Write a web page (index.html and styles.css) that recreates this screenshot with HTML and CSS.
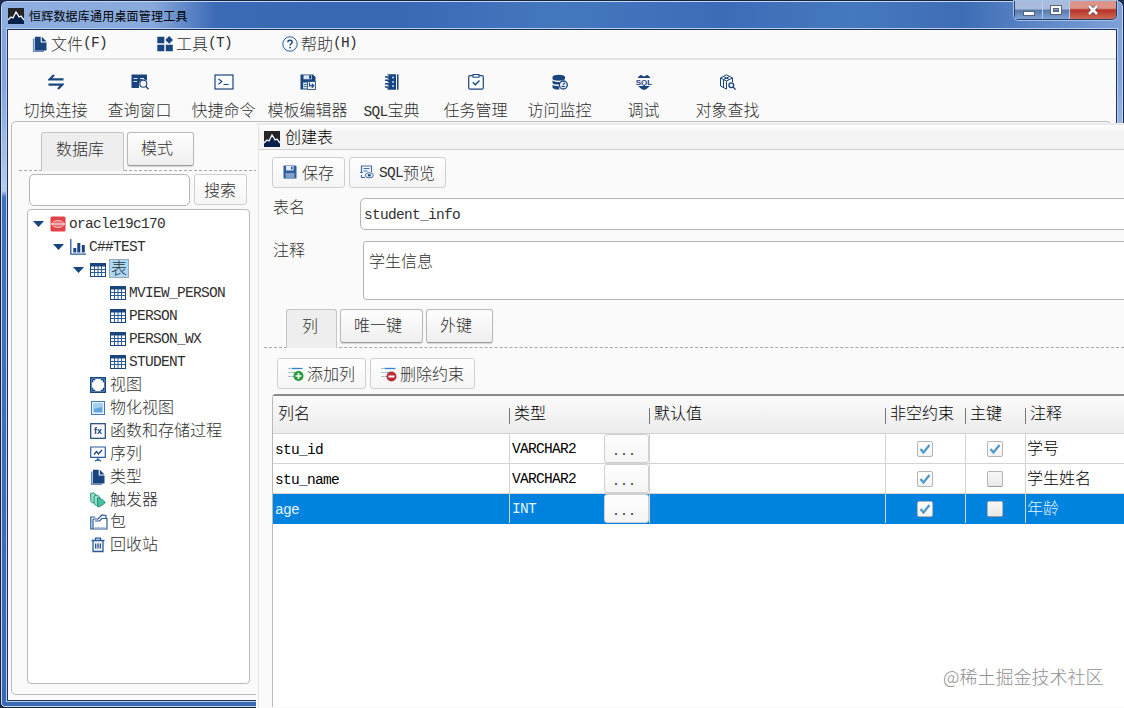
FILE: index.html
```html
<!DOCTYPE html>
<html lang="zh-CN">
  <head>
    <meta charset="UTF-8" />
    <meta name="viewport" content="width=device-width, initial-scale=1.0" />
    <title>恒辉数据库通用桌面管理工具</title>
    <link rel="stylesheet" href="styles.css">
  </head>
  <body>
    <svg class="sprite" xmlns="http://www.w3.org/2000/svg">
      <symbol id="logo" viewBox="0 0 16 16">
        <rect width="16" height="16" fill="#242426" />
        <path d="M0 11 3 9l2 1 3-5 2 2 1 2 2-1 3 3v5H0z" fill="#07204a" />
        <path d="M0 12l3-3 2 1 3-6 2 3 1 2 2-1 3 4" fill="none" stroke="#fff" stroke-width="1.3" />
      </symbol>
      <symbol id="file" viewBox="0 0 16 16">
        <path d="M1.7 2.5v12.7H12" fill="none" stroke="#6c8cba" stroke-width="1.6" />
        <path d="M3 .8h5.700v5.700h5.800v8H3z" fill="#18457f" />
        <path d="M9.8.8l4.7 4.6H9.8z" fill="#18457f" />
      </symbol>
      <symbol id="tools" viewBox="0 0 16 16">
        <path d="M.3.8h7v6.500h-7zM.3 8.800h7v6.500h-7zM8.800 8.800h7v6.500h-7zM12.2 0 16 3.900l-3.800 3.900L8.300 3.900z" fill="#18457f" />
      </symbol>
      <symbol id="help" viewBox="0 0 16 16">
        <circle cx="8" cy="8" r="7.2" fill="none" stroke="#2b5d9c" />
        <path d="M5.800 6.300c0-2.800 4.400-2.800 4.400 0C10.200 7.700 8 7.800 8 9.600" fill="none" stroke="#18457f" stroke-width="1.4" />
        <rect x="7.2" y="10.8" width="1.6" height="1.6" fill="#18457f" />
      </symbol>
      <symbol id="switch" viewBox="0 0 16 16">
        <path d="M6 1 1.800 5.300h13.700M10 15l4.200-4.300H.5" fill="none" stroke="#18457f" stroke-width="2.2" />
      </symbol>
      <symbol id="query" viewBox="0 0 18 16">
        <path d="M.5.5H16v6.200c-3-2.700-8-.7-8 3.500V14H.5z" fill="#18457f" />
        <path d="M2.500 4.500h4M2.500 7.500h3.500M9 4.500h4" stroke="#d9e4f2" />
        <circle cx="12.3" cy="9.7" r="3.5" fill="#fafafa" stroke="#18457f" stroke-width="1.1" />
        <path d="M14.800 12.300l2.700 3" stroke="#18457f" stroke-width="1.3" />
      </symbol>
      <symbol id="terminal" viewBox="0 0 20 16">
        <rect x="1" y="1" width="18" height="14" fill="#fbfcfe" stroke="#18457f" stroke-width="1.2" />
        <path d="M4.500 5l3.300 2.600-3.300 2.600M9.500 10.500h5" fill="none" stroke="#18457f" stroke-width="1.2" />
      </symbol>
      <symbol id="template" viewBox="0 0 16 16">
        <path d="M.5.5H13L15.500 3v12.500H.5z" fill="#18457f" />
        <path d="M3.500 1.200h8.500v4H3.500zM3 8.500h5v6H3z" fill="#dbe5f2" />
        <path d="M9.500 1.500h1.500v3H9.500zM3.500 10.500H7M3.500 12.500H7" fill="#18457f" stroke="#18457f" stroke-width=".7" />
        <path d="M7.500 7.500h8v8h-8z" fill="#fafafa" stroke="#18457f" stroke-width=".8" />
        <path d="M9.500 8.500v3.300h4M11.800 9.800l2 2-2 2" fill="none" stroke="#18457f" stroke-width="1.2" />
      </symbol>
      <symbol id="book" viewBox="0 0 16 16">
        <path d="M3.500.3H12v15.400H3.500zM13 .3h1.500v15.400H13z" fill="#18457f" />
        <path d="M1 2.500h4M1 5.800h4M1 9.200h4M1 12.600h4" stroke="#fafafa" stroke-width="2" />
        <path d="M1 3h4.500M1 6.300h4.500M1 9.700h4.500M1 13h4.500" stroke="#18457f" stroke-width="1.4" />
        <path d="M8 3.500h2M8 8h2M8 12h2" stroke="#c9d7ea" stroke-width="1.6" />
      </symbol>
      <symbol id="task" viewBox="0 0 16 16">
        <rect x=".7" y="1.7" width="14.6" height="13.5" rx="1.5" fill="#fcfdfe" stroke="#18457f" stroke-width="1.2" />
        <rect x="5" y=".5" width="6" height="2.7" fill="#fafafa" stroke="#18457f" />
        <path d="M4.800 8.300l2.500 2.500 4.200-4.200" fill="none" stroke="#18457f" stroke-width="1.4" />
      </symbol>
      <symbol id="monitor" viewBox="0 0 16 16">
        <path d="M.5 2.700C1 0 12.500 0 13 2.700v2.200C12 7.200 1 7.200.5 4.900zM.5 6.500C3 8.500 8 8 8 8l-1 2.500C4 10.700 1 10.200.5 9zM.5 11c2 1.400 6 1 6 1l1 3.500C4 15.800 1 15 .5 13.500z" fill="#18457f" />
        <circle cx="11.3" cy="11" r="4" fill="#e5edf7" stroke="#18457f" stroke-width="1.3" />
        <path d="M11 11l1.600-2.200M9.500 12.500h3.500" stroke="#18457f" stroke-width="1.2" />
      </symbol>
      <symbol id="find" viewBox="0 0 17 16">
        <path d="M1 4 7 .8 13 4 7 7zM1 4v8l6 3V7M13 4v4M4 2.500l6 3M10 2.500l-6 3v7.500" fill="none" stroke="#18457f" stroke-width="1" />
        <circle cx="11.8" cy="11.2" r="2.4" fill="#e1eaf5" stroke="#18457f" stroke-width="1.3" />
        <path d="M13.500 13l2.700 2.600" stroke="#18457f" stroke-width="1.3" />
      </symbol>
      <symbol id="oracle" viewBox="0 0 16 16">
        <rect x=".5" y=".5" width="15" height="15" rx="1.5" fill="#e24347" />
        <ellipse cx="8" cy="8" rx="5.8" ry="3.5" fill="none" stroke="#f7c5c4" />
        <path d="M1 8h14" stroke="#fbe4e3" stroke-width="1.3" />
        <path d="M4 6h8M4 10h8" stroke="#f7c5c4" stroke-width=".7" />
      </symbol>
      <symbol id="chart" viewBox="0 0 16 16">
        <path d="M.8 0v15.200H16" fill="none" stroke="#2b5d9c" stroke-width="1.3" />
        <path d="M3.300 9h3v4.500h-3zM7.300 4h3v9.500h-3zM11.800 6h3v7.500h-3z" fill="#18457f" />
      </symbol>
      <symbol id="table" viewBox="0 0 16 16">
        <rect x=".5" y="1.5" width="15" height="13" fill="#fff" stroke="#18457f" />
        <path d="M0 1h16v3.500H0z" fill="#18457f" />
        <path d="M1 7.500h14M1 10.500h14M4.500 4v10M8 4v10M11.500 4v10" stroke="#2b5d9c" />
      </symbol>
      <symbol id="view" viewBox="0 0 16 16">
        <rect x=".7" y=".7" width="14.6" height="14.6" fill="#7fa6d6" stroke="#18457f" stroke-width="1.4" />
        <path d="M3.500 3.500h9v9h-9zM5.500 2h5v12h-5zM2 5.500h12v5H2z" fill="#fff" />
        <path d="M2.500 5V2.500H5M11 2.500h2.500V5M13.500 11v2.500H11M5 13.500H2.500V11" fill="none" stroke="#18457f" />
      </symbol>
      <symbol id="mview" viewBox="0 0 16 16">
        <rect x="1.5" y="1.5" width="13" height="13" fill="#eaf4fc" stroke="#4477b5" />
        <path d="M3.500 3.500h9v9h-9z" fill="#62a5dd" />
        <path d="M3.500 3.500h9v3.500l-9 2z" fill="#a3cff0" />
      </symbol>
      <symbol id="sequence" viewBox="0 0 16 16">
        <path d="M.7 1h14.600v10.300H.7zM8 11.500V15M5 15.300l3-2 3 2" fill="none" stroke="#2b5d9c" stroke-width="1.2" />
        <path d="M4 8.500l2.500-3L8.500 8l3.500-4" fill="none" stroke="#18457f" stroke-width="1.3" />
      </symbol>
      <symbol id="trigger" viewBox="0 0 16 16">
        <path d="M.5 1.500 4 .8 6 3v7L3 11 .8 9.500z" fill="#9adcc6" stroke="#2c9c82" />
        <path d="M4 4l3.500-1L9.500 5v7l-3 1.500L4.200 12z" fill="#9adcc6" stroke="#2c9c82" />
        <path d="M7.500 6c3 0 5.500 2 7.800 4.500-2.300 2.200-4.500 3.800-7.500 4.500z" fill="#46c3a2" stroke="#218a70" />
      </symbol>
      <symbol id="package" viewBox="0 0 18 16">
        <path d="M3 15H.8V3h4.500M3 5h5l4-4 4 .5V4M3 5v10h14V4.500h-5L9.500 7H5" fill="none" stroke="#2b5d9c" stroke-width="1.2" />
        <path d="M4.500 13.500h11" stroke="#9db9dc" stroke-width=".8" />
      </symbol>
      <symbol id="trash" viewBox="0 0 16 16">
        <path d="M1.500 3.500h13M5.500 3V1.200h5V3M3 4v10.500h10V4" fill="#edf3fa" stroke="#2b5d9c" stroke-width="1.3" />
        <path d="M5.700 6.500v5M8 6.500v5M10.300 6.500v5" stroke="#18457f" stroke-width="1.2" />
      </symbol>
      <symbol id="save" viewBox="0 0 14 14">
        <path d="M.5.5h12l1 1v12H.5z" fill="#2e5d9d" />
        <path d="M3 1h7.500v4.500H3z" fill="#e2eaf4" />
        <path d="M8 1.500h1.500v3H8z" fill="#2e5d9d" />
        <path d="M2.500 8h9v5.500h-9z" fill="#7f9dc5" />
      </symbol>
      <symbol id="preview" viewBox="0 0 14 14">
        <path d="M5 12.500H1.500V10M1.500 8V1h10v6" fill="none" stroke="#3f6ea8" stroke-width="1.2" />
        <path d="M3.500 3.500h6M3.500 6h4M0 7.500h3" stroke="#3f6ea8" />
        <ellipse cx="9.3" cy="10.3" rx="4" ry="2.6" fill="#e2eaf4" stroke="#3f6ea8" />
        <circle cx="9.3" cy="10.3" r="1.3" fill="#18457f" />
      </symbol>
      <symbol id="add" viewBox="0 0 16 16">
        <path d="M.5 2.500h2M.5 6.500h2M.5 10.500h2" stroke="#8aa" />
        <path d="M3.500 2.500h11" stroke="#2d86cf" stroke-width="1.3" />
        <path d="M3.500 6.500h9M3.500 10.500h5" stroke="#7fb6cf" />
        <circle cx="10.5" cy="10" r="5" fill="#259a3b" />
        <path d="M7.500 10h6M10.500 7v6" stroke="#fff" stroke-width="1.6" />
      </symbol>
      <symbol id="remove" viewBox="0 0 16 16">
        <path d="M.5 2.500h2M.5 6.500h2M.5 10.500h2" stroke="#8aa" />
        <path d="M3.500 2.500h11" stroke="#2d86cf" stroke-width="1.3" />
        <path d="M3.500 6.500h9M3.500 10.500h5" stroke="#7fb6cf" />
        <circle cx="10.5" cy="10.5" r="5" fill="#b92f38" />
        <path d="M7.500 10.500h6" stroke="#fff" stroke-width="2" />
      </symbol>
      <symbol id="check" viewBox="0 0 12 12">
        <path d="M1.500 6l3 3.500L10.500 2" fill="none" stroke="#4e9acb" stroke-width="2.3" />
      </symbol>
      <symbol id="arrow" viewBox="0 0 11 6">
        <path d="M0 0h11L5.500 6z" fill="#18457f" />
      </symbol>
    </svg>

    <div class="window">
      <div class="title-bar">
        <svg class="logo"><use href="#logo" /></svg>
        <div class="title-text">恒辉数据库通用桌面管理工具</div>
        <div class="window-buttons">
          <div class="win-btn win-min"><svg viewBox="0 0 12 5"><rect x=".5" y=".5" width="11" height="4" fill="#fff" stroke="#55637e" /></svg></div>
          <div class="win-btn win-max"><svg viewBox="0 0 12 10"><rect x="2" y="2" width="8" height="6" fill="none" stroke="#55637e" stroke-width="4" /><rect x="2" y="2" width="8" height="6" fill="none" stroke="#fff" stroke-width="2" /></svg></div>
          <div class="win-btn win-close"><svg viewBox="0 0 12 10"><path d="M2 1l8 8M10 1 2 9" stroke="#5e4350" stroke-width="4" /><path d="M2 1l8 8M10 1 2 9" stroke="#fff" stroke-width="2.6" /></svg></div>
        </div>
      </div>

      <div class="client">
        <div class="menu-bar">
          <div class="menu-item"><svg><use href="#file" /></svg>文件<span class="en">(F)</span></div>
          <div class="menu-item"><svg><use href="#tools" /></svg>工具<span class="en">(T)</span></div>
          <div class="menu-item"><svg><use href="#help" /></svg>帮助<span class="en">(H)</span></div>
        </div>

        <div class="toolbar">
          <div class="tool"><svg><use href="#switch" /></svg><div>切换连接</div></div>
          <div class="tool"><svg class="wide"><use href="#query" /></svg><div>查询窗口</div></div>
          <div class="tool"><svg class="wider"><use href="#terminal" /></svg><div>快捷命令</div></div>
          <div class="tool"><svg><use href="#template" /></svg><div>模板编辑器</div></div>
          <div class="tool"><svg><use href="#book" /></svg><div><span class="en">SQL</span>宝典</div></div>
          <div class="tool"><svg><use href="#task" /></svg><div>任务管理</div></div>
          <div class="tool"><svg><use href="#monitor" /></svg><div>访问监控</div></div>
          <div class="tool">
            <svg class="wide" viewBox="0 0 18 16">
              <path d="M3 3 6 .7l2 1.600h2L12 .7 15 3v1H3zM3 12h12l-3.500 3-2.500 1-2.500-1z" fill="#18457f" />
              <text x="9" y="10.8" class="sql-glyph">SQL</text>
            </svg>
            <div>调试</div>
          </div>
          <div class="tool"><svg class="wide"><use href="#find" /></svg><div>对象查找</div></div>
        </div>

        <div class="workspace">
          <div class="sidebar">
            <div class="tabs">
              <div class="tab active">数据库</div>
              <div class="tab">模式</div>
            </div>
            <div class="search">
              <input type="text" class="search-input" />
              <button class="btn">搜索</button>
            </div>
            <div class="tree">
              <div class="node"><svg class="arrow"><use href="#arrow" /></svg><svg class="icon"><use href="#oracle" /></svg><span class="en">oracle19c170</span></div>
              <div class="node level-1"><svg class="arrow"><use href="#arrow" /></svg><svg class="icon"><use href="#chart" /></svg><span class="en">C##TEST</span></div>
              <div class="node level-2"><svg class="arrow"><use href="#arrow" /></svg><svg class="icon"><use href="#table" /></svg><span class="selected">表</span></div>
              <div class="node leaf level-3"><svg class="icon"><use href="#table" /></svg><span class="en">MVIEW_PERSON</span></div>
              <div class="node leaf level-3"><svg class="icon"><use href="#table" /></svg><span class="en">PERSON</span></div>
              <div class="node leaf level-3"><svg class="icon"><use href="#table" /></svg><span class="en">PERSON_WX</span></div>
              <div class="node leaf level-3"><svg class="icon"><use href="#table" /></svg><span class="en">STUDENT</span></div>
              <div class="node leaf level-2"><svg class="icon"><use href="#view" /></svg>视图</div>
              <div class="node leaf level-2"><svg class="icon"><use href="#mview" /></svg>物化视图</div>
              <div class="node leaf level-2">
                <svg class="icon" viewBox="0 0 16 16">
                  <rect x=".7" y=".7" width="14.6" height="14.6" fill="#fff" stroke="#18457f" stroke-width="1.2" />
                  <text x="8" y="11.3" class="fx-glyph">fx</text>
                </svg>
                函数和存储过程
              </div>
              <div class="node leaf level-2"><svg class="icon"><use href="#sequence" /></svg>序列</div>
              <div class="node leaf level-2"><svg class="icon"><use href="#file" /></svg>类型</div>
              <div class="node leaf level-2"><svg class="icon"><use href="#trigger" /></svg>触发器</div>
              <div class="node leaf level-2"><svg class="icon folder"><use href="#package" /></svg>包</div>
              <div class="node leaf level-2"><svg class="icon"><use href="#trash" /></svg>回收站</div>
            </div>
          </div>
        </div>
      </div>
    </div>

    <div class="dialog">
      <div class="dialog-title"><svg class="logo"><use href="#logo" /></svg>创建表</div>
      <div class="actions">
        <button class="btn"><svg class="small"><use href="#save" /></svg>保存</button>
        <button class="btn"><svg class="small"><use href="#preview" /></svg><span class="en">SQL</span>预览</button>
      </div>
      <div class="form">
        <label for="tableName">表名</label>
        <input type="text" id="tableName" class="name-input en" value="student_info" />
        <label for="tableComment">注释</label>
        <textarea id="tableComment" class="comment-input">学生信息</textarea>
      </div>
      <div class="tabs">
        <div class="tab active">列</div>
        <div class="tab">唯一键</div>
        <div class="tab">外键</div>
      </div>
      <div class="actions column-actions">
        <button class="btn"><svg><use href="#add" /></svg>添加列</button>
        <button class="btn"><svg><use href="#remove" /></svg>删除约束</button>
      </div>
      <div class="grid">
        <div class="row head">
          <div>列名</div>
          <div>类型</div>
          <div>默认值</div>
          <div>非空约束</div>
          <div>主键</div>
          <div>注释</div>
        </div>
        <div class="row">
          <div class="name en">stu_id</div>
          <div class="type"><span class="en">VARCHAR2</span><button class="btn more">...</button></div>
          <div></div>
          <div class="flag"><span class="box"><svg><use href="#check" /></svg></span></div>
          <div class="flag"><span class="box"><svg><use href="#check" /></svg></span></div>
          <div>学号</div>
        </div>
        <div class="row">
          <div class="name en">stu_name</div>
          <div class="type"><span class="en">VARCHAR2</span><button class="btn more">...</button></div>
          <div></div>
          <div class="flag"><span class="box"><svg><use href="#check" /></svg></span></div>
          <div class="flag"><span class="box empty"></span></div>
          <div>学生姓名</div>
        </div>
        <div class="row current">
          <div class="name en">age</div>
          <div class="type"><span class="en">INT</span><button class="btn more">...</button></div>
          <div></div>
          <div class="flag"><span class="box"><svg><use href="#check" /></svg></span></div>
          <div class="flag"><span class="box empty"></span></div>
          <div>年龄</div>
        </div>
      </div>
      <div class="watermark">@稀土掘金技术社区</div>
    </div>
  </body>
</html>
```

FILE: styles.css
```css
* {
  box-sizing: border-box;
}

body {
  margin: 0;
  width: 1124px;
  height: 708px;
  overflow: hidden;
  position: relative;
  background: #1b2c4d;
  color: #303030;
  font: 300 16px/22px "Noto Sans CJK SC", sans-serif;
}

svg {
  display: block;
  flex: none;
  width: 16px;
  height: 16px;
}

.sprite {
  position: absolute;
  width: 0;
  height: 0;
}

.en {
  font-family: "Liberation Mono", monospace;
  font-size: 14.5px;
  letter-spacing: -0.7px;
}

.sql-glyph,
.fx-glyph {
  font: bold 8px "Liberation Sans", sans-serif;
  text-anchor: middle;
  fill: #18457f;
}

.fx-glyph {
  font-size: 9px;
}

/* main window */
.window {
  height: 708px;
  border: 1px solid #16243f;
  border-radius: 7px 7px 5px 5px;
  padding: 0 5px 5px;
  background: linear-gradient(#8aa9de, #7fa3dc 75px, #b7cbec 190px, #4273ba 196px, #3b69b1);
  box-shadow: inset 0 0 0 1px #c3d6f2;
  display: flex;
  flex-direction: column;
}

.title-bar {
  height: 27px;
  margin: 1px -4px 0;
  padding: 0 5px 0 6px;
  border-radius: 5px 5px 0 0;
  background: linear-gradient(90deg, #8fafe0 0, #88a9dc 150px, #3a69b5 215px, #3a69b3 400px, #4577bf 560px, #3c6cb6 720px, #4678bf 850px, #3e6db6 960px, #7ea1d8);
  display: flex;
  align-items: center;
}

.title-text {
  margin-left: 5px;
  flex: 1;
  color: #000;
  font-size: 12px;
  font-weight: 400;
  letter-spacing: 0.2px;
}

.window-buttons {
  display: flex;
  align-self: flex-start;
  height: 19px;
  margin-top: -1px;
  border: 1px solid #24406f;
  border-top: none;
  border-radius: 0 0 5px 5px;
  box-shadow: 0 0 0 1px #a5c0e8;
}

.win-btn {
  width: 28px;
  display: flex;
  align-items: center;
  justify-content: center;
  background: linear-gradient(#a9bcdb 45%, #5678ab 50%, #81a4d5);
  border-right: 1px solid #b8ccec;
}

.win-btn svg {
  width: 12px;
  height: 10px;
}

.win-max {
  width: 27px;
}

.win-min svg {
  height: 5px;
  margin-top: 6px;
}

.win-close {
  width: 46px;
  border: none;
  border-radius: 0 0 4px 0;
  background: linear-gradient(#dc9488 40%, #b83127 50%, #cd6a55);
}

.client {
  flex: 1;
  min-height: 0;
  border: 1px solid #1b335c;
  box-shadow: 0 0 0 1px #b9cff0;
  margin: 0 1px 1px;
  background: #fafafa;
  display: flex;
  flex-direction: column;
}

.menu-bar {
  height: 30px;
  border-bottom: 2px solid #e3e3e3;
  padding-left: 24px;
  display: flex;
  flex: none;
}

/* text sits a bit higher than the icons */
.menu-item {
  width: 125px;
  padding-bottom: 3px;
  display: flex;
  align-items: center;
}

.menu-item svg {
  margin: 3px 3px 0 0;
}

.menu-item .en {
  margin-top: 1px;
}

.toolbar {
  height: 61px;
  padding: 14px 0 0 6px;
  display: flex;
  flex: none;
}

.tool {
  width: 84px;
  display: flex;
  flex-direction: column;
  align-items: center;
  white-space: nowrap;
}

.tool div {
  margin: 8px 1px 0 0;
}

svg.wide {
  width: 18px;
}

svg.wider {
  width: 20px;
}

.workspace {
  flex: 1;
  min-height: 0;
  margin: 0 4px 5px 3px;
  border: 1px solid #bcbcbc;
  border-radius: 5px;
  padding: 10px 0 0 7px;
}

.sidebar {
  width: 238px;
}

.tabs {
  height: 39px;
  padding-left: 22px;
  display: flex;
  gap: 3px;
  border-bottom: 1px dashed #a8a8a8;
}

.tab {
  height: 34px;
  padding: 0 20px 4px 13px;
  border: 1px solid #b9b9b9;
  border-bottom-color: #9c9c9c;
  border-radius: 3px;
  background: linear-gradient(#fefefe, #efefef);
  box-shadow: 0 1px 1px #d5d5d5;
  display: flex;
  align-items: center;
}

.tab.active {
  height: 39px;
  padding: 0 19px 9px 14px;
  border-color: #c5c5c5;
  border-bottom: none;
  border-radius: 3px 3px 0 0;
  background: #eee;
  box-shadow: none;
}

.search {
  padding: 3px 0 0 10px;
  display: flex;
  gap: 4px;
}

input,
textarea {
  border: 1px solid #b5b5b5;
  border-radius: 5px;
  background: #fff;
  color: #303030;
  outline: none;
}

.search-input {
  width: 161px;
  height: 32px;
}

.btn {
  height: 31px;
  border: 1px solid #cfcfcf;
  border-radius: 3px;
  padding: 0 10px 2px 9px;
  background: linear-gradient(#fefefe, #f5f5f5);
  color: #303030;
  font: 300 16px/22px "Noto Sans CJK SC", sans-serif;
  white-space: nowrap;
  display: flex;
  align-items: center;
}

.btn .en {
  margin-top: 2px;
}

.tree {
  width: 223px;
  height: 475px;
  margin: 3px 0 0 8px;
  border: 1px solid #b8b8b8;
  border-radius: 4px;
  background: #fff;
  padding: 3px 0 0 5px;
}

.node {
  height: 22.93px;
  padding-bottom: 4px;
  display: flex;
  align-items: center;
}

.node svg,
.node .en {
  margin-top: 4px;
}

.arrow {
  width: 11px;
  height: 6px;
  margin-right: 6px;
}

.icon {
  margin-right: 4px;
}

.icon.folder {
  width: 18px;
  margin-right: 2px;
}

.level-1 {
  padding-left: 20px;
}

.level-2 {
  padding-left: 40px;
}

.level-3 {
  padding-left: 60px;
}

.leaf .icon {
  margin-left: 17px;
}

.node .en {
  margin-left: -1px;
}

.selected {
  height: 19px;
  margin: 1px 0 0 -1px;
  padding: 0 1px;
  border: 1px solid #9aa9b6;
  background: #a9d8fa;
  line-height: 15px;
}

/* create table dialog */
.dialog {
  position: absolute;
  left: 256px;
  top: 123px;
  width: 868px;
  height: 585px;
  border-top: 2px solid #eaeaea;
  border-left: 2px solid #fafafa;
  background: #fafafa;
  box-shadow: inset 1px 0 0 #e4e4e4;
  padding-left: 6px;
}

.dialog-title {
  height: 25px;
  margin-left: -5px;
  padding: 0 0 2px 5px;
  border-bottom: 1px solid #cfcfcf;
  background: linear-gradient(#fff 0, #f4f4f4 7px);
  color: #000;
  display: flex;
  align-items: center;
}

.dialog-title .logo {
  margin: 5px 5px 0 0;
}

.actions {
  display: flex;
  gap: 4px;
  padding: 7px 0 0 8px;
}

.actions svg {
  margin: 2px 3px 0 0;
}

.actions svg.small {
  width: 14px;
  height: 14px;
  margin: 0 5px 0 1px;
}

.form {
  display: grid;
  grid-template-columns: 87px 1fr;
  grid-template-rows: 32px 59px;
  row-gap: 11px;
  padding: 10px 0 0 9px;
}

label {
  margin-top: -3px;
}

.name-input {
  width: 780px;
  height: 32px;
  padding: 2px 3px 0;
}

.comment-input {
  width: 780px;
  height: 59px;
  margin-left: 3px;
  padding: 7px 5px;
  border-radius: 3px;
  font: inherit;
  resize: none;
  overflow: hidden;
}

.dialog .tabs {
  margin-top: 9px;
}

.dialog .tab.active {
  padding-left: 15px;
  padding-right: 18px;
}

.column-actions {
  padding: 10px 0 0 13px;
}

.column-actions .btn {
  padding-left: 10px;
}

.grid {
  height: 313px;
  margin: 5px 0 0 8px;
  border-top: 2px solid #8a8a8a;
  border-left: 1px solid #b9b9b9;
  border-radius: 4px 0 0 0;
  background: #fff;
  color: #000;
}

.row {
  display: grid;
  grid-template-columns: 237px 140px 236px 80px 60px 1fr;
  height: 30px;
  border-bottom: 1px solid #d3d3d3;
}

.row > div {
  border-right: 1px solid #d3d3d3;
  padding-left: 1px;
  display: flex;
  align-items: center;
}

.row > div:last-child {
  border-right: none;
  padding-bottom: 3px;
}

.row.head {
  height: 38px;
  background: linear-gradient(#fbfbfb, #ececec);
}

.row.head > div {
  position: relative;
  border: none;
  padding: 0 0 5px 4px;
}

.row.head > div:first-child {
  padding-left: 5px;
}

.head > div:not(:first-child)::before {
  content: "";
  position: absolute;
  left: -1px;
  top: 12px;
  width: 1px;
  height: 16px;
  background: #777;
}

.row > .name {
  padding: 3px 0 0 2px;
}

.row > .type {
  padding-left: 2px;
  justify-content: space-between;
}

.more {
  width: 45px;
  height: 29px;
  padding: 6px 5px 0 0;
  justify-content: center;
  font-family: "Liberation Mono", monospace;
  font-size: 13.33px;
}

.row > .flag {
  padding: 0 1px 0 0;
  justify-content: center;
}

.box {
  width: 16px;
  height: 16px;
  border: 1px solid #b5b5b5;
  border-radius: 2px;
  background: linear-gradient(#fff, #f3f3f3);
  display: flex;
  align-items: center;
  justify-content: center;
}

.box svg {
  width: 12px;
  height: 12px;
}

.box.empty {
  background: linear-gradient(#f7f7f7, #e9e9e9);
  border-bottom-color: #999;
}

.row.current {
  background: #0083de;
  border-bottom-color: #0083de;
  color: #e4f5ff;
}

.watermark {
  position: absolute;
  left: 685px;
  top: 540px;
  color: #8f8f8f;
  font-size: 18px;
}
```
